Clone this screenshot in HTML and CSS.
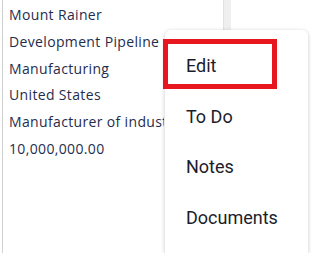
FILE: index.html
```html
<!DOCTYPE html>
<html lang="en">
<head>
    <meta charset="UTF-8">
    <meta name="viewport" content="width=device-width, initial-scale=1.0">
    <title>Account Details</title>
    <link rel="stylesheet" href="styles.css">
</head>
<body>

    <div class="panel">
        <div class="details">
            <div class="value">Mount Rainer</div>
            <div class="value">Development Pipeline</div>
            <div class="value">Manufacturing</div>
            <div class="value">United States</div>
            <div class="value">Manufacturer of industrial equipment</div>
            <div class="value">10,000,000.00</div>
        </div>
        <div class="splitter"></div>
        <div class="rest"></div>
    </div>

    <ul class="menu">
        <li class="menu-item">Edit</li>
        <li class="menu-item">To Do</li>
        <li class="menu-item">Notes</li>
        <li class="menu-item">Documents</li>
    </ul>

    <div class="highlight"></div>

</body>
</html>
```

FILE: styles.css
```css
body {
    margin: 0;
    background-color: #fff;
    font-family: "Open Sans", Arial, sans-serif;
    overflow: hidden;
    height: 253px;
}
.panel {
    display: flex;
    height: 253px;
    margin-left: 2px;
}
.details {
    width: 214px;
    border-left: 1px solid #d2d2d2;
    padding: 2px 0 0 6px;
    overflow: hidden;
}
.value {
    font-size: 14px;
    letter-spacing: 0.35px;
    line-height: 26.8px;
    color: #1f2d4d;
    white-space: nowrap;
    max-width: 155px;
    overflow: hidden;
}
.splitter {
    width: 7px;
    background-color: #efefef;
    border-left: 1px solid #e2e2e2;
}
.rest {
    flex: 1;
}
.menu {
    position: absolute;
    left: 165px;
    top: 30px;
    width: 143px;
    height: 223px;
    margin: 0;
    padding: 11px 0 0 0;
    list-style: none;
    background-color: #fff;
    border-radius: 6px 6px 0 0;
    box-shadow: 0 1px 4px rgba(0, 0, 0, 0.22);
    box-sizing: border-box;
}
.menu-item {
    font-family: Roboto, Arial, sans-serif;
    font-size: 18px;
    line-height: 50.6px;
    padding-left: 21px;
    color: #1c1d2a;
}
.highlight {
    position: absolute;
    left: 163px;
    top: 39px;
    width: 114px;
    height: 50px;
    border: 5px solid #e8161f;
    box-sizing: border-box;
}
```
